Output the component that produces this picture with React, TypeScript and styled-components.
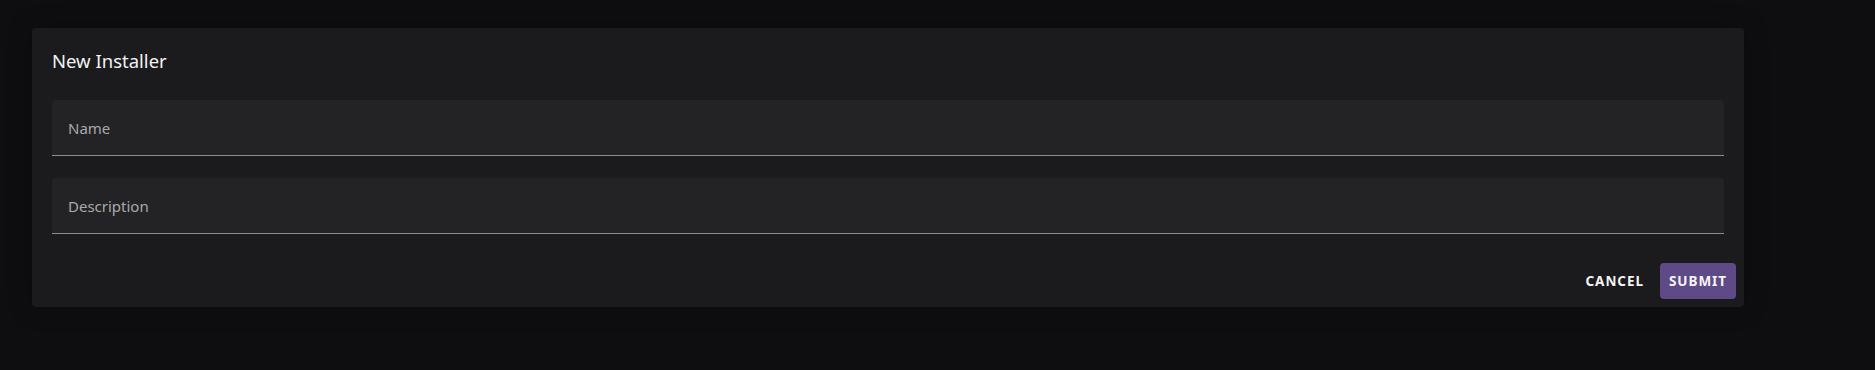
import styled, { createGlobalStyle } from "styled-components";

const GlobalStyle = createGlobalStyle`
  html, body {
    margin: 0;
    padding: 0;
    background: #0e0e10;
  }
  body {
    font-family: "Noto Sans", "Open Sans", sans-serif;
    color: #ececec;
  }
`;

const Page = styled.div`
  min-height: 370px;
  padding: 28px 131px 0 32px;
  box-sizing: border-box;
`;

const Card = styled.form`
  background: #1b1b1d;
  border-radius: 4px;
  box-shadow: 0 0 24px rgba(0, 0, 0, 0.25);
  display: flex;
  flex-direction: column;
`;

const Title = styled.h2`
  margin: 0;
  padding: 20px 20px 26px;
  font-size: 18.5px;
  font-weight: 400;
  line-height: 26px;
  color: #f2f2f2;
`;

const Fields = styled.div`
  display: flex;
  flex-direction: column;
  gap: 22px;
  padding: 0 20px;
`;

const Field = styled.label`
  display: flex;
  align-items: center;
  height: 56px;
  box-sizing: border-box;
  padding: 0 16px;
  background: #232325;
  border-radius: 4px 4px 0 0;
  border-bottom: 1px solid #8c8c8e;
`;

const Input = styled.input`
  flex: 1;
  background: transparent;
  border: none;
  outline: none;
  font-family: inherit;
  font-size: 15px;
  color: #e6e6e6;
  padding: 0;
  &::placeholder {
    color: #a9a9ab;
  }
`;

const Actions = styled.div`
  display: flex;
  justify-content: flex-end;
  gap: 8px;
  padding: 29px 8px 8px;
`;

const Button = styled.button<{ $primary?: boolean }>`
  height: 36px;
  padding: 0 ${(p) => (p.$primary ? "9px" : "8px")};
  border: none;
  border-radius: 4px;
  background: ${(p) => (p.$primary ? "#5e4a87" : "transparent")};
  color: #f4f4f4;
  font-family: inherit;
  font-size: 13.5px;
  font-weight: 700;
  letter-spacing: 0.07em;
  text-transform: uppercase;
  cursor: pointer;
`;

export default function App() {
  return (
    <>
      <GlobalStyle />
      <Page>
        <Card onSubmit={(e) => e.preventDefault()}>
          <Title>New Installer</Title>
          <Fields>
            <Field>
              <Input placeholder="Name" />
            </Field>
            <Field>
              <Input placeholder="Description" />
            </Field>
          </Fields>
          <Actions>
            <Button type="button">Cancel</Button>
            <Button type="submit" $primary>
              Submit
            </Button>
          </Actions>
        </Card>
      </Page>
    </>
  );
}
